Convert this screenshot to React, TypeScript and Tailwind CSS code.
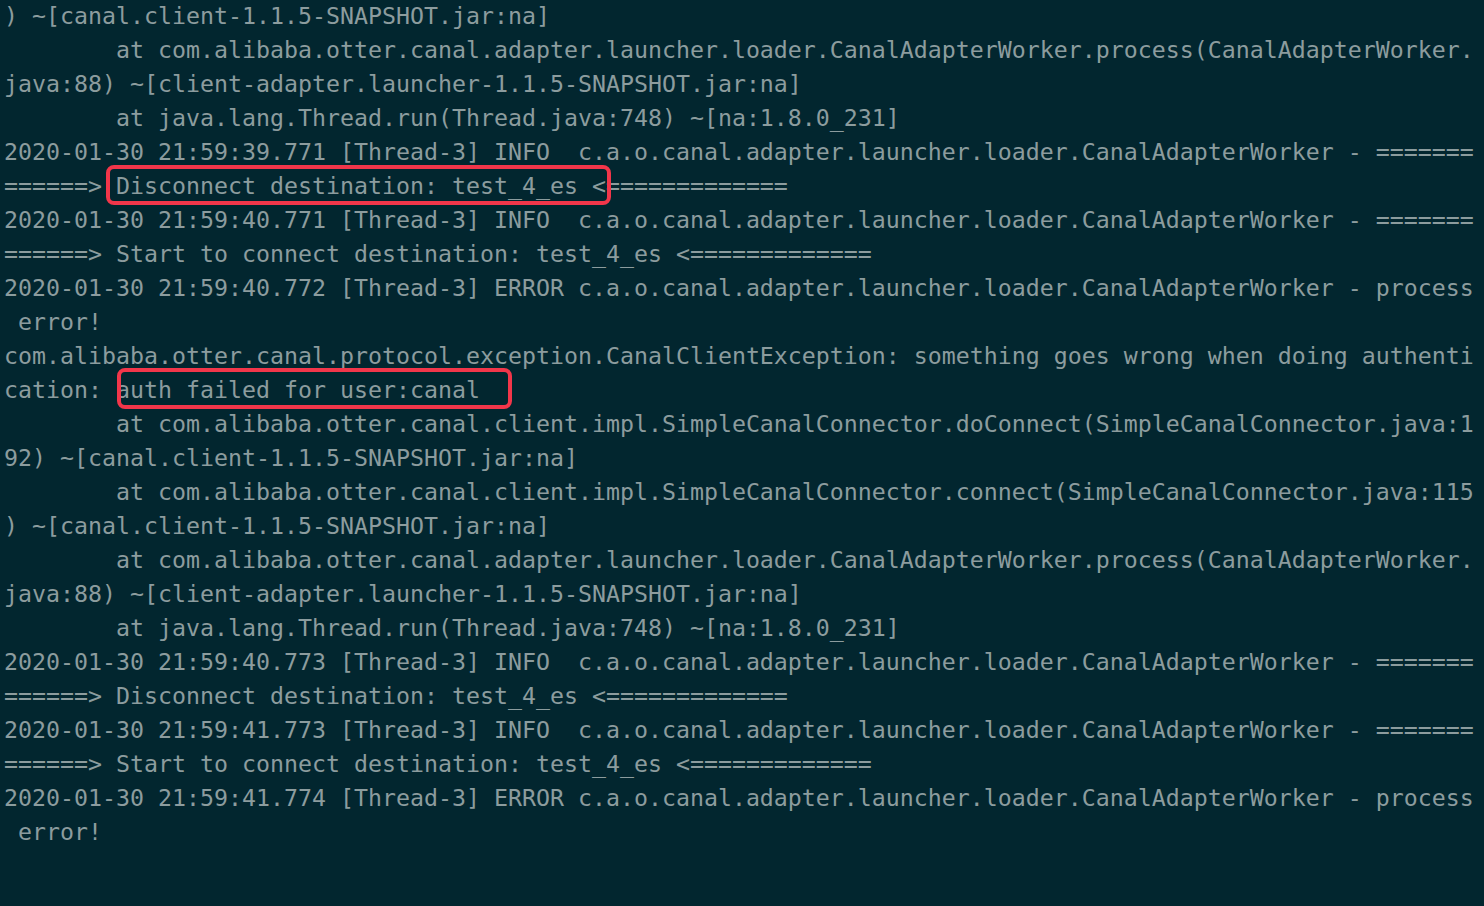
const LINES: string[] = [
  ") ~[canal.client-1.1.5-SNAPSHOT.jar:na]",
  "        at com.alibaba.otter.canal.adapter.launcher.loader.CanalAdapterWorker.process(CanalAdapterWorker.",
  "java:88) ~[client-adapter.launcher-1.1.5-SNAPSHOT.jar:na]",
  "        at java.lang.Thread.run(Thread.java:748) ~[na:1.8.0_231]",
  "2020-01-30 21:59:39.771 [Thread-3] INFO  c.a.o.canal.adapter.launcher.loader.CanalAdapterWorker - =======",
  "======> Disconnect destination: test_4_es <=============",
  "2020-01-30 21:59:40.771 [Thread-3] INFO  c.a.o.canal.adapter.launcher.loader.CanalAdapterWorker - =======",
  "======> Start to connect destination: test_4_es <=============",
  "2020-01-30 21:59:40.772 [Thread-3] ERROR c.a.o.canal.adapter.launcher.loader.CanalAdapterWorker - process",
  " error!",
  "com.alibaba.otter.canal.protocol.exception.CanalClientException: something goes wrong when doing authenti",
  "cation: auth failed for user:canal",
  "        at com.alibaba.otter.canal.client.impl.SimpleCanalConnector.doConnect(SimpleCanalConnector.java:1",
  "92) ~[canal.client-1.1.5-SNAPSHOT.jar:na]",
  "        at com.alibaba.otter.canal.client.impl.SimpleCanalConnector.connect(SimpleCanalConnector.java:115",
  ") ~[canal.client-1.1.5-SNAPSHOT.jar:na]",
  "        at com.alibaba.otter.canal.adapter.launcher.loader.CanalAdapterWorker.process(CanalAdapterWorker.",
  "java:88) ~[client-adapter.launcher-1.1.5-SNAPSHOT.jar:na]",
  "        at java.lang.Thread.run(Thread.java:748) ~[na:1.8.0_231]",
  "2020-01-30 21:59:40.773 [Thread-3] INFO  c.a.o.canal.adapter.launcher.loader.CanalAdapterWorker - =======",
  "======> Disconnect destination: test_4_es <=============",
  "2020-01-30 21:59:41.773 [Thread-3] INFO  c.a.o.canal.adapter.launcher.loader.CanalAdapterWorker - =======",
  "======> Start to connect destination: test_4_es <=============",
  "2020-01-30 21:59:41.774 [Thread-3] ERROR c.a.o.canal.adapter.launcher.loader.CanalAdapterWorker - process",
  " error!",
];

// red annotation boxes drawn over the log
function Highlight({ index }: { index: number }) {
  if (index === 5) {
    return (
      <div className="pointer-events-none absolute left-[102px] top-[-4px] h-[40px] w-[505px] rounded-[8px] border-4 border-[#f2364a]" />
    );
  }
  if (index === 11) {
    return (
      <div className="pointer-events-none absolute left-[113px] top-[-5px] h-[41px] w-[395px] rounded-[8px] border-4 border-[#f2364a]" />
    );
  }
  return null;
}

export default function App() {
  return (
    <div className="h-[906px] w-[1484px] overflow-hidden bg-[#02262f] pl-[4px]">
      <div className="-mt-px font-['DejaVu_Sans_Mono','Liberation_Mono',monospace] text-[23.25px] leading-[34px] text-[#8c9c9e]">
        {LINES.map((line, i) => (
          <div key={i} className="relative h-[34px] whitespace-pre">
            {line}
            <Highlight index={i} />
          </div>
        ))}
      </div>
    </div>
  );
}
